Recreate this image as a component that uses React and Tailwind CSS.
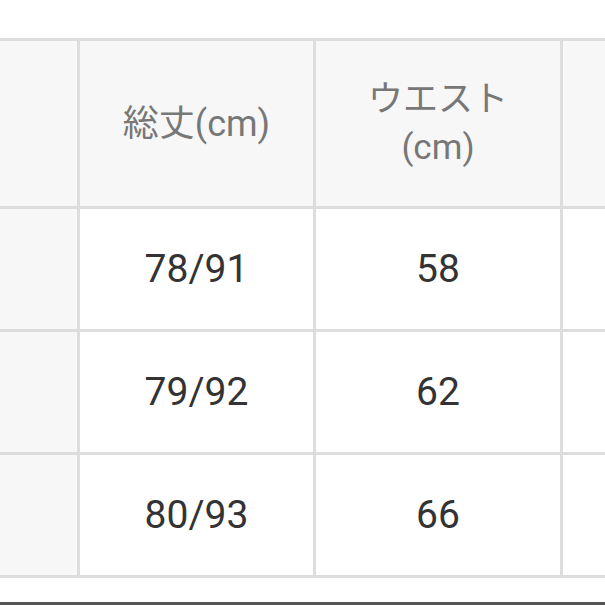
import React from "react";

const rows = [
    ["78/91", "58"],
    ["79/92", "62"],
    ["80/93", "66"],
];

const font = { fontFamily: "Roboto, 'Noto Sans CJK JP', sans-serif" };

const App = () => {
    return (
        <div className="w-[605px] h-[605px] bg-white overflow-hidden flex flex-col" style={font}>
            <div className="h-[38px]"></div>
            <div className="grid grid-cols-[77px_233px_244px_60px] grid-rows-[165px_120px_120px_120px] gap-[3px] py-[3px] pr-[3px] bg-[#dddddd] w-[626px]">
                <div className="bg-[#f7f7f7]"></div>
                <div className="bg-[#f7f7f7] flex items-center justify-center text-[36px] leading-[48px] text-[#777] text-center">
                    総丈(cm)
                </div>
                <div className="bg-[#f7f7f7] flex items-center justify-center text-[35px] leading-[48px] text-[#777] text-center">
                    ウエスト<br />(cm)
                </div>
                <div className="bg-[#f7f7f7]"></div>
                {rows.map((row, i) => (
                    <React.Fragment key={i}>
                        <div className="bg-[#f7f7f7]"></div>
                        <div className="bg-white flex items-center justify-center text-[39px] text-[#333]">{row[0]}</div>
                        <div className="bg-white flex items-center justify-center text-[39px] text-[#333]">{row[1]}</div>
                        <div className="bg-white"></div>
                    </React.Fragment>
                ))}
            </div>
            <div className="flex-1"></div>
            <div className="h-[3px] bg-[#555]"></div>
        </div>
    );
};

export default App;
